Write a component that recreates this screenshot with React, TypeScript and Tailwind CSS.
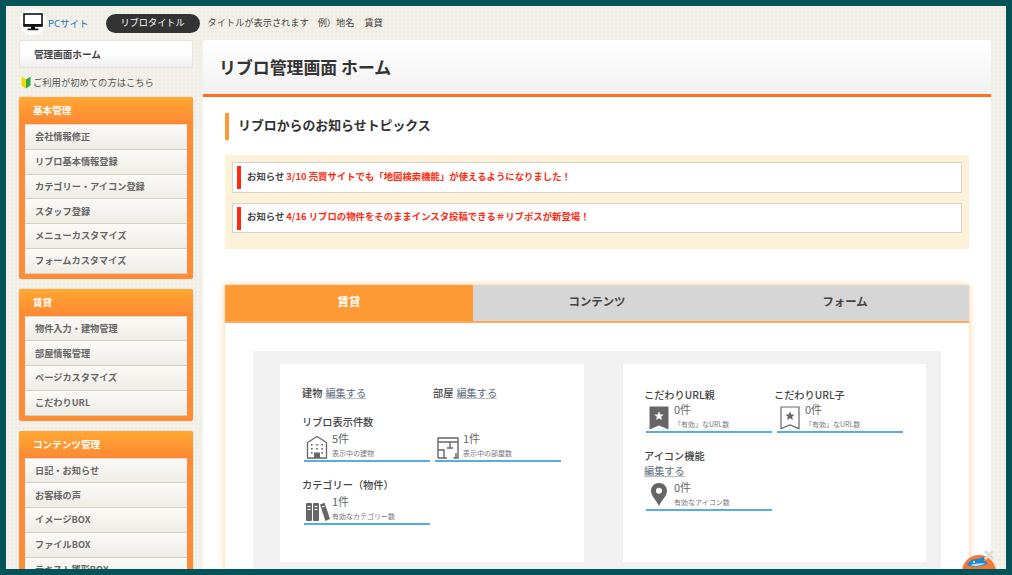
import React from 'react';

const menus = [
  { title: '基本管理', items: ['会社情報修正', 'リブロ基本情報登録', 'カテゴリー・アイコン登録', 'スタッフ登録', 'メニューカスタマイズ', 'フォームカスタマイズ'] },
  { title: '賃貸', items: ['物件入力・建物管理', '部屋情報管理', 'ページカスタマイズ', 'こだわりURL'] },
  { title: 'コンテンツ管理', items: ['日記・お知らせ', 'お客様の声', 'イメージBOX', 'ファイルBOX', 'テキスト雛形BOX'] },
];

function MonitorIcon() {
  return (
    <svg width="20" height="18" viewBox="0 0 20 18">
      <rect x="1" y="1" width="18" height="12" fill="none" stroke="#111" strokeWidth="1.6" />
      <rect x="1" y="11" width="18" height="2.2" fill="#111" />
      <rect x="8" y="13" width="4" height="3" fill="#111" />
      <rect x="4.5" y="15.6" width="11" height="1.6" fill="#111" />
    </svg>
  );
}

function BeginnerIcon() {
  return (
    <svg width="10" height="13" viewBox="0 0 10 13">
      <path d="M0.5 0.5 L5 3.5 V12.5 L0.5 9.5 Z" fill="#f5d800" />
      <path d="M9.5 0.5 L5 3.5 V12.5 L9.5 9.5 Z" fill="#2fa84f" />
    </svg>
  );
}

function BuildingIcon() {
  return (
    <svg width="22" height="24" viewBox="0 0 22 24" fill="none">
      <path d="M1.5 23 V7.5 L11 1.5 L20.5 7.5 V23 Z" stroke="#666" strokeWidth="1.3" />
      <g fill="#666">
        <rect x="5" y="9" width="1.6" height="1.6" /><rect x="10.2" y="9" width="1.6" height="1.6" /><rect x="15.4" y="9" width="1.6" height="1.6" />
        <rect x="5" y="13" width="1.6" height="1.6" /><rect x="10.2" y="13" width="1.6" height="1.6" /><rect x="15.4" y="13" width="1.6" height="1.6" />
        <rect x="5" y="17" width="1.6" height="1.6" /><rect x="15.4" y="17" width="1.6" height="1.6" />
        <rect x="8" y="17.5" width="6" height="5.5" />
      </g>
    </svg>
  );
}

function FloorIcon() {
  return (
    <svg width="22" height="22" viewBox="0 0 22 22" fill="none" stroke="#666" strokeWidth="1.4">
      <path d="M1 21 V1 H21 V21 H16.5 M21 5 H1 M13 5 V11 M10 11 H16 M1 13 H7 V21 H1 M7 21 H10 M19 16 V21" />
    </svg>
  );
}

function BooksIcon() {
  return (
    <svg width="24" height="20" viewBox="0 0 24 20">
      <g fill="#666">
        <rect x="0" y="1" width="6" height="18" rx="1" />
        <rect x="7" y="1" width="6" height="18" rx="1" />
        <path d="M14 2.5 L18.6 0.8 L24 17 L19.4 19 Z" />
      </g>
      <g fill="#fff">
        <rect x="1.5" y="4" width="3" height="1" /><rect x="8.5" y="4" width="3" height="1" />
        <rect x="1.5" y="7" width="3" height="1" /><rect x="8.5" y="7" width="3" height="1" />
        <path d="M16 4.6 L18.6 3.7 L19 4.6 L16.3 5.6 Z" />
      </g>
    </svg>
  );
}

const starPath = 'M10 5.2 L11.3 8.4 L14.7 8.6 L12.1 10.8 L12.9 14.1 L10 12.3 L7.1 14.1 L7.9 10.8 L5.3 8.6 L8.7 8.4 Z';

function BookmarkFilledIcon() {
  return (
    <svg className="ml-[1px]" width="20" height="24" viewBox="0 0 20 24">
      <path d="M0.5 0.5 H19.5 V23.5 L10 19.5 L0.5 23.5 Z" fill="#666" />
      <path d={starPath} fill="#fff" />
    </svg>
  );
}

function BookmarkOutlineIcon() {
  return (
    <svg className="ml-[1px]" width="20" height="24" viewBox="0 0 20 24">
      <path d="M1 1 H19 V22.5 L10 19 L1 22.5 Z" fill="#fff" stroke="#666" strokeWidth="1.2" />
      <path d={starPath} fill="#666" />
    </svg>
  );
}

function PinIcon() {
  return (
    <svg className="ml-[3px] mb-[2px]" width="16" height="23" viewBox="0 0 16 23">
      <path fillRule="evenodd" d="M8 0 C3.5 0 0 3.4 0 7.8 C0 13 5.5 17.5 8 23 C10.5 17.5 16 13 16 7.8 C16 3.4 12.5 0 8 0 Z M8 4.8 A3 3 0 1 1 8 10.8 A3 3 0 1 1 8 4.8 Z" fill="#666" />
    </svg>
  );
}

function Stat({ icon, count, label }: { icon: React.ReactNode; count: string; label: string }) {
  return (
    <div className="w-[126px] h-[30px] ml-[2px] flex border-b-2 border-[#55ade0]">
      <div className="w-[28px] pl-[2px] flex items-end pb-[1px] shrink-0">{icon}</div>
      <div className="flex flex-col">
        <span className="text-[11px] leading-[12px] text-[#666]">{count}</span>
        <span className="text-[7px] leading-[10px] text-[#777] mt-[4px] whitespace-nowrap">{label}</span>
      </div>
    </div>
  );
}

function EditLink() {
  return <span className="text-[10.2px] leading-[14px] text-[#5b6b7b] underline decoration-[#b8c0c8]">編集する</span>;
}

function Heading({ children }: { children: React.ReactNode }) {
  return <div className="text-[10.2px] leading-[14px] font-medium text-[#444] whitespace-nowrap">{children}</div>;
}

export default function App() {
  return (
    <div className="relative h-[575px] overflow-hidden border-[6px] border-[#045358] bg-[#f3f1ea] bg-[radial-gradient(#eeebe2_1px,transparent_1px)] bg-[length:4px_4px] font-['Noto_Sans_CJK_JP','Liberation_Sans',sans-serif]">
      {/* ヘッダー */}
      <div className="h-[34px] pl-[14px] flex items-center">
        <div className="w-[26px] h-[26px] mt-[-3px] rounded-full bg-white flex items-center justify-center">
          <MonitorIcon />
        </div>
        <span className="ml-[2px] text-[9.5px] text-[#1a78c2] whitespace-nowrap">PCサイト</span>
        <div className="ml-[17px] w-[94px] h-[19px] rounded-full bg-[#333] flex items-center justify-center text-[9.2px] text-white whitespace-nowrap">リブロタイトル</div>
        <span className="ml-[8px] text-[9.2px] text-[#444] whitespace-nowrap">タイトルが表示されます</span>
        <span className="ml-[9px] text-[9.2px] text-[#444] whitespace-nowrap">例）地名</span>
        <span className="ml-[10px] text-[9.2px] text-[#444] whitespace-nowrap">賃貸</span>
      </div>

      <div className="flex pl-[13px] gap-[10px] items-start">
        {/* サイドバー */}
        <div className="w-[174px] shrink-0">
          <div className="h-[28px] pl-[14px] flex items-center rounded-[2px] border border-[#e6e4de] bg-gradient-to-b from-white via-white to-[#eeeeee] text-[9.6px] font-bold text-[#444]">管理画面ホーム</div>
          <div className="h-[29px] flex items-center gap-[2px] pl-[2px] text-[9.3px] text-[#555] whitespace-nowrap">
            <BeginnerIcon />
            <span>ご利用が初めての方はこちら</span>
          </div>
          <div className="flex flex-col gap-[10px]">
            {menus.map((menu) => (
              <div key={menu.title} className="rounded-[3px] bg-[#ff8c37] pb-[5px] shadow-[0_0_1px_#c9a070]">
                <div className="h-[27px] pl-[14px] flex items-center rounded-t-[3px] bg-gradient-to-b from-[#ffa833] to-[#ff8833] text-[9.6px] font-bold text-white">{menu.title}</div>
                <div className="mx-[6px] border-t border-[#e0d8c8]">
                  {menu.items.map((item) => (
                    <div key={item} className="h-[24.75px] pl-[10px] pt-[1px] flex items-center border-b border-[#d6d0c0] bg-gradient-to-b from-[#fbfaf7] to-[#f0ede7] text-[9.2px] font-bold text-[#666] whitespace-nowrap">{item}</div>
                  ))}
                </div>
              </div>
            ))}
          </div>
        </div>

        {/* メイン */}
        <div className="w-[788px] shrink-0 rounded-t-[4px] bg-white">
          <div className="h-[57px] pl-[16px] flex items-center border-b-[3px] border-[#ff6f1f] rounded-t-[4px] bg-gradient-to-b from-white to-[#f1f1f1] text-[16.9px] font-bold text-[#333] whitespace-nowrap">リブロ管理画面 ホーム</div>

          <div className="pt-[16px] px-[22px]">
            <div className="h-[27px] pl-[9px] pb-[3px] flex items-center border-l-4 border-[#ff9933] text-[12.9px] font-bold text-[#333]">リブロからのお知らせトピックス</div>

            <div className="mt-[15px] h-[94px] bg-[#fdf1d8] pt-[7px] px-[7px] flex flex-col gap-[10px]">
              <div className="h-[31px] flex items-center pl-[4px] bg-white border border-[#d8d4cc] text-[9.4px] font-bold whitespace-nowrap">
                <div className="w-[4px] h-[23px] bg-[#ff2a10]" />
                <span className="ml-[6px] mt-[-2px] text-[#444]">お知らせ</span>
                <span className="ml-[2px] mt-[-2px] text-[#ff2a10]">3/10 売買サイトでも「地図検索機能」が使えるようになりました！</span>
              </div>
              <div className="h-[30px] flex items-center pl-[4px] bg-white border border-[#d8d4cc] text-[9.4px] font-bold whitespace-nowrap">
                <div className="w-[4px] h-[23px] bg-[#ff2a10]" />
                <span className="ml-[6px] mt-[-3px] text-[#444]">お知らせ</span>
                <span className="ml-[2px] mt-[-3px] text-[#ff2a10]">4/16 リブロの物件をそのままインスタ投稿できる＃リブポスが新登場！</span>
              </div>
            </div>

            {/* タブ */}
            <div className="mt-[36px] bg-white shadow-[0_0_6px_#ffc880]">
              <div className="flex h-[38px] border-b-2 border-[#ffa95c] text-[11.4px] font-bold">
                <div className="w-[248px] pb-[2px] bg-[#ff9933] text-white flex items-center justify-center">賃貸</div>
                <div className="w-[248px] pb-[2px] bg-[#d6d6d6] text-[#444] flex items-center justify-center">コンテンツ</div>
                <div className="w-[248px] pb-[2px] bg-[#d6d6d6] text-[#444] flex items-center justify-center">フォーム</div>
              </div>
              <div className="pt-[28px] px-[28px]">
                <div className="h-[230px] bg-[#f1f1f1] pt-[13px] pl-[27px] flex gap-[39px]">
                  {/* 左カード */}
                  <div className="w-[304px] h-[198px] bg-white pl-[22px] pt-[22px]">
                    <div className="grid grid-cols-[131px_131px]">
                      <div className="flex items-center gap-[3px]"><Heading>建物</Heading><EditLink /></div>
                      <div className="flex items-center gap-[3px]"><Heading>部屋</Heading><EditLink /></div>
                    </div>
                    <div className="mt-[15px]"><Heading>リブロ表示件数</Heading></div>
                    <div className="mt-[3px] grid grid-cols-[131px_131px]">
                      <Stat icon={<BuildingIcon />} count="5件" label="表示中の建物" />
                      <Stat icon={<FloorIcon />} count="1件" label="表示中の部屋数" />
                    </div>
                    <div className="mt-[16px]"><Heading>カテゴリー（物件）</Heading></div>
                    <div className="mt-[3px]">
                      <Stat icon={<BooksIcon />} count="1件" label="有効なカテゴリー数" />
                    </div>
                  </div>
                  {/* 右カード */}
                  <div className="w-[303px] h-[198px] bg-white pl-[21px] pt-[24px]">
                    <div className="grid grid-cols-[130px_131px]">
                      <Heading>こだわりURL親</Heading>
                      <Heading>こだわりURL子</Heading>
                    </div>
                    <div className="mt-[1px] grid grid-cols-[131px_131px]">
                      <Stat icon={<BookmarkFilledIcon />} count="0件" label="「有効」なURL数" />
                      <Stat icon={<BookmarkOutlineIcon />} count="0件" label="「有効」なURL数" />
                    </div>
                    <div className="mt-[16px]"><Heading>アイコン機能</Heading></div>
                    <div className="mt-[1px] flex"><EditLink /></div>
                    <div className="mt-[3px]">
                      <Stat icon={<PinIcon />} count="0件" label="有効なアイコン数" />
                    </div>
                  </div>
                </div>
              </div>
            </div>
          </div>
        </div>
      </div>

      {/* マスコットのバナー */}
      <div className="absolute right-[10px] bottom-[-20px] w-[34px] h-[34px] rounded-full bg-[#f47a35]" />
      <svg className="absolute right-[17px] bottom-[1px]" width="23" height="13" viewBox="0 0 26 14">
        <path d="M1 11 C4 5 10 3 15 4 L21 1 L20 6 L25 9 C20 13 6 14 1 11 Z" fill="#1f86d0" />
        <path d="M5 11 C10 9 16 9 22 9 C17 12 9 13 5 11 Z" fill="#bfe3f7" />
        <circle cx="9" cy="7.5" r="1.2" fill="#fff" />
      </svg>
      <svg className="absolute right-[11px] bottom-[8px]" width="12" height="12" viewBox="0 0 12 12">
        <path d="M2 2 L10 10 M10 2 L2 10" stroke="#dcdcd6" strokeWidth="3" />
      </svg>
    </div>
  );
}
